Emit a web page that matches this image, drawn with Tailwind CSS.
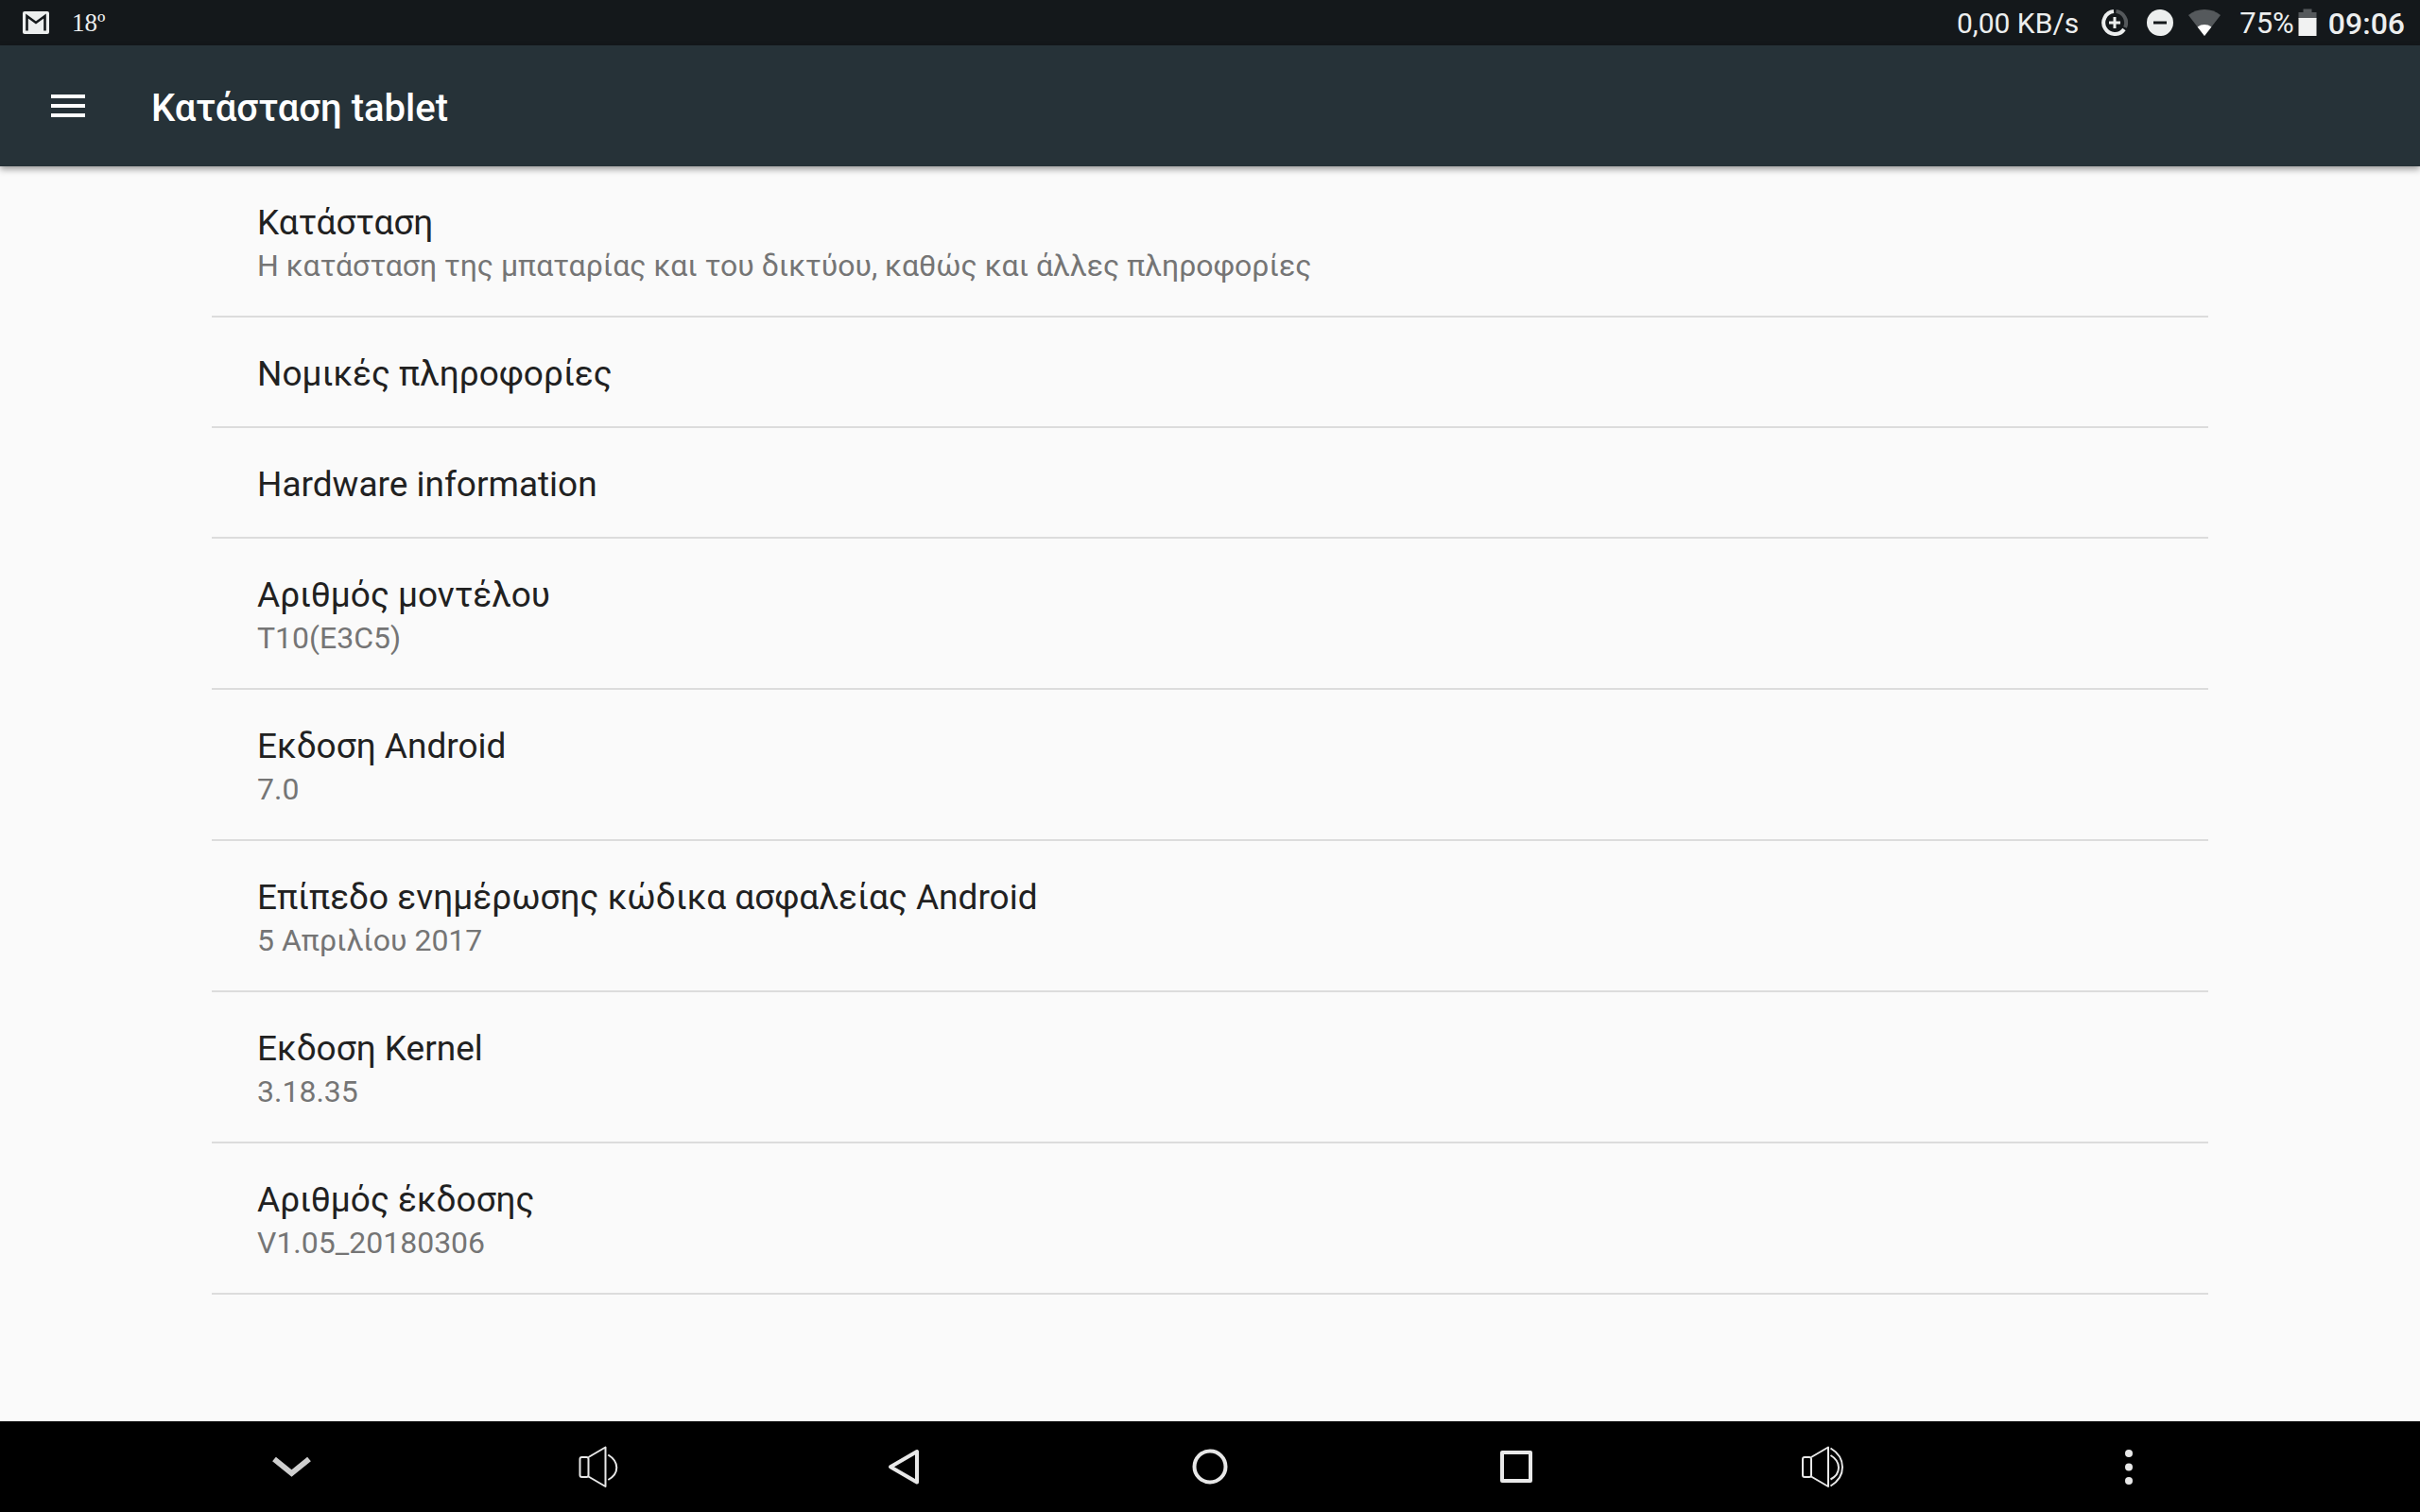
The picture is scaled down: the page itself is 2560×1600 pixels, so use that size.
<!DOCTYPE html>
<html lang="el">
<head>
  <meta charset="UTF-8" />
  <meta name="viewport" content="width=device-width, initial-scale=1.0" />
  <title>Κατάσταση tablet</title>
  <script src="https://cdn.jsdelivr.net/npm/@tailwindcss/browser@4"></script>
</head>
<body class="min-h-screen flex flex-col bg-[#fafafa] font-['Roboto','Noto_Sans',sans-serif] text-[#212121]">

  <!-- STATUS BAR -->
  <div class="h-12 bg-[#14181b] text-[#eceeee] flex items-center justify-between pl-6 pr-4">
    <div class="flex items-center gap-6">
      <svg class="w-7 h-6" viewBox="0 0 28 24" aria-label="Gmail">
        <rect width="28" height="24" rx="2" fill="#eceeee" />
        <path d="M4.5 20.5V5L14 12L23.5 5V20.5" fill="none" stroke="#14181b" stroke-width="2.6" />
      </svg>
      <span class="font-['Liberation_Serif',serif] text-[27px] leading-[48px]">18º</span>
    </div>
    <div class="flex items-center text-[31px] leading-[46px]">
      <span class="pt-[2px] text-[30px]">0,00 KB/s</span>
      <svg class="w-7 h-7 ml-6" viewBox="0 0 28 28" fill="none" stroke="#eceeee" aria-label="Data saver">
        <path d="M15.5 2.1A12 12 0 0 1 25 19" stroke="#55595c" stroke-width="4" />
        <path d="M13 2.1A12 12 0 1 0 24 21" stroke-width="4" />
        <path d="M14 8V20M8 14H20" stroke-width="3" />
      </svg>
      <svg class="w-7 h-7 ml-5" viewBox="0 0 28 28" aria-label="Do not disturb">
        <circle cx="14" cy="14" r="14" fill="#eceeee" />
        <path d="M7 14H21" stroke="#14181b" stroke-width="3" />
      </svg>
      <svg class="w-[34px] h-7 ml-4" viewBox="0 0 34 28" aria-label="Wi-Fi">
        <path d="M17 28L0 6Q7 0 17 0T34 6Z" fill="#55595c" />
        <path d="M17 28L9.6 18.4Q13 16 17 16T24.4 18.4Z" fill="#fff" />
      </svg>
      <span class="ml-5 pt-[2px]">75%</span>
      <svg class="w-5 h-[30px] ml-1" viewBox="0 0 20 30" aria-label="Battery">
        <path d="M0.500 4H5.500V0.500H14.500V4H19.500V11H0.500Z" fill="#55595c" />
        <rect x="0.500" y="10" width="19" height="19" fill="#f1f2f2" />
      </svg>
      <span class="ml-3 pt-[2px] text-[32px] font-medium">09:06</span>
    </div>
  </div>

  <!-- APP BAR -->
  <header class="h-32 bg-[#263238] text-white flex items-center px-[54px] shadow-[0_3px_7px_rgba(0,0,0,0.4)]">
    <button type="button" aria-label="Menu">
      <svg class="w-9 h-6" viewBox="0 0 36 24" fill="#fff">
        <path d="M0 0H36V4H0ZM0 10H36V14H0ZM0 20H36V24H0Z" />
      </svg>
    </button>
    <h1 class="ml-[70px] pt-[6px] text-[40px] leading-[48px] font-medium">Κατάσταση tablet</h1>
  </header>

  <!-- SETTINGS LIST -->
  <main class="flex-1 px-[224px]">
    <ul>
      <li class="border-b-2 border-[#dcdcdc]">
        <a href="#" class="block px-12 pt-[38px] pb-[33px]">
          <span class="block text-[37px] leading-[44px]">Κατάσταση</span>
          <span class="block mt-1 text-[32px] leading-[39px] text-[#757575]">Η κατάσταση της μπαταρίας και του δικτύου, καθώς και άλλες πληροφορίες</span>
        </a>
      </li>
      <li class="border-b-2 border-[#dcdcdc]">
        <a href="#" class="block px-12 pt-[38px] pb-[33px]">
          <span class="block text-[37px] leading-[44px]">Νομικές πληροφορίες</span>
        </a>
      </li>
      <li class="border-b-2 border-[#dcdcdc]">
        <a href="#" class="block px-12 pt-[38px] pb-[33px]">
          <span class="block text-[37px] leading-[44px]">Hardware information</span>
        </a>
      </li>
      <li class="border-b-2 border-[#dcdcdc]">
        <a href="#" class="block px-12 pt-[38px] pb-[33px]">
          <span class="block text-[37px] leading-[44px]">Αριθμός μοντέλου</span>
          <span class="block mt-1 text-[32px] leading-[39px] text-[#757575]">T10(E3C5)</span>
        </a>
      </li>
      <li class="border-b-2 border-[#dcdcdc]">
        <a href="#" class="block px-12 pt-[38px] pb-[33px]">
          <span class="block text-[37px] leading-[44px]">Εκδοση Android</span>
          <span class="block mt-1 text-[32px] leading-[39px] text-[#757575]">7.0</span>
        </a>
      </li>
      <li class="border-b-2 border-[#dcdcdc]">
        <a href="#" class="block px-12 pt-[38px] pb-[33px]">
          <span class="block text-[37px] leading-[44px]">Επίπεδο ενημέρωσης κώδικα ασφαλείας Android</span>
          <span class="block mt-1 text-[32px] leading-[39px] text-[#757575]">5 Απριλίου 2017</span>
        </a>
      </li>
      <li class="border-b-2 border-[#dcdcdc]">
        <a href="#" class="block px-12 pt-[38px] pb-[33px]">
          <span class="block text-[37px] leading-[44px]">Εκδοση Kernel</span>
          <span class="block mt-1 text-[32px] leading-[39px] text-[#757575]">3.18.35</span>
        </a>
      </li>
      <li class="border-b-2 border-[#dcdcdc]">
        <a href="#" class="block px-12 pt-[38px] pb-[33px]">
          <span class="block text-[37px] leading-[44px]">Αριθμός έκδοσης</span>
          <span class="block mt-1 text-[32px] leading-[39px] text-[#757575]">V1.05_20180306</span>
        </a>
      </li>
    </ul>
  </main>

  <!-- NAVIGATION BAR -->
  <nav class="h-24 bg-black flex px-[146px]">
    <button type="button" aria-label="Hide" class="flex-1 flex items-center justify-center">
      <svg class="w-16 h-16" viewBox="0 0 64 64" fill="none" stroke="#cfcfcf" stroke-width="6">
        <path d="M14 24L32.500 39L51 24" />
      </svg>
    </button>
    <button type="button" aria-label="Volume down" class="flex-1 flex items-center justify-center">
      <svg class="w-16 h-16" viewBox="0 0 64 64" fill="none" stroke="#e8e8e8" stroke-width="2">
        <rect x="13.500" y="22" width="9" height="21" rx="2" />
        <path d="M22.500 22L40.500 11.500V53L22.500 42.500" stroke-linejoin="round" />
        <path d="M43.300 19.500Q52.300 25 52.300 33T43.300 46" />
      </svg>
    </button>
    <button type="button" aria-label="Back" class="flex-1 flex items-center justify-center">
      <svg class="w-16 h-16" viewBox="0 0 64 64" fill="none" stroke="#e8e8e8" stroke-width="4" stroke-linejoin="round">
        <path d="M18 32.300L46 16V48.600Z" />
      </svg>
    </button>
    <button type="button" aria-label="Home" class="flex-1 flex items-center justify-center">
      <svg class="w-16 h-16" viewBox="0 0 64 64" fill="none" stroke="#e8e8e8" stroke-width="4">
        <circle cx="32" cy="32" r="16.500" />
      </svg>
    </button>
    <button type="button" aria-label="Recent apps" class="flex-1 flex items-center justify-center">
      <svg class="w-16 h-16" viewBox="0 0 64 64" fill="none" stroke="#e8e8e8" stroke-width="4" stroke-linejoin="round">
        <rect x="17" y="17" width="30" height="30" />
      </svg>
    </button>
    <button type="button" aria-label="Volume up" class="flex-1 flex items-center justify-center">
      <svg class="w-16 h-16" viewBox="0 0 64 64" fill="none" stroke="#e8e8e8" stroke-width="2">
        <rect x="11" y="22" width="9" height="21" rx="2" />
        <path d="M20 22L38 11.500V53L20 42.500" stroke-linejoin="round" />
        <path d="M40.500 20Q49 25 49 33T40.500 45.500" />
        <path d="M40.500 12.500Q53 20 53 32.500T40.500 52.500" />
      </svg>
    </button>
    <button type="button" aria-label="More" class="flex-1 flex items-center justify-center">
      <svg class="w-16 h-16" viewBox="0 0 64 64" fill="#e8e8e8">
        <circle cx="32" cy="18" r="4" />
        <circle cx="32" cy="32.500" r="4" />
        <circle cx="32" cy="47" r="4" />
      </svg>
    </button>
  </nav>

</body>
</html>
